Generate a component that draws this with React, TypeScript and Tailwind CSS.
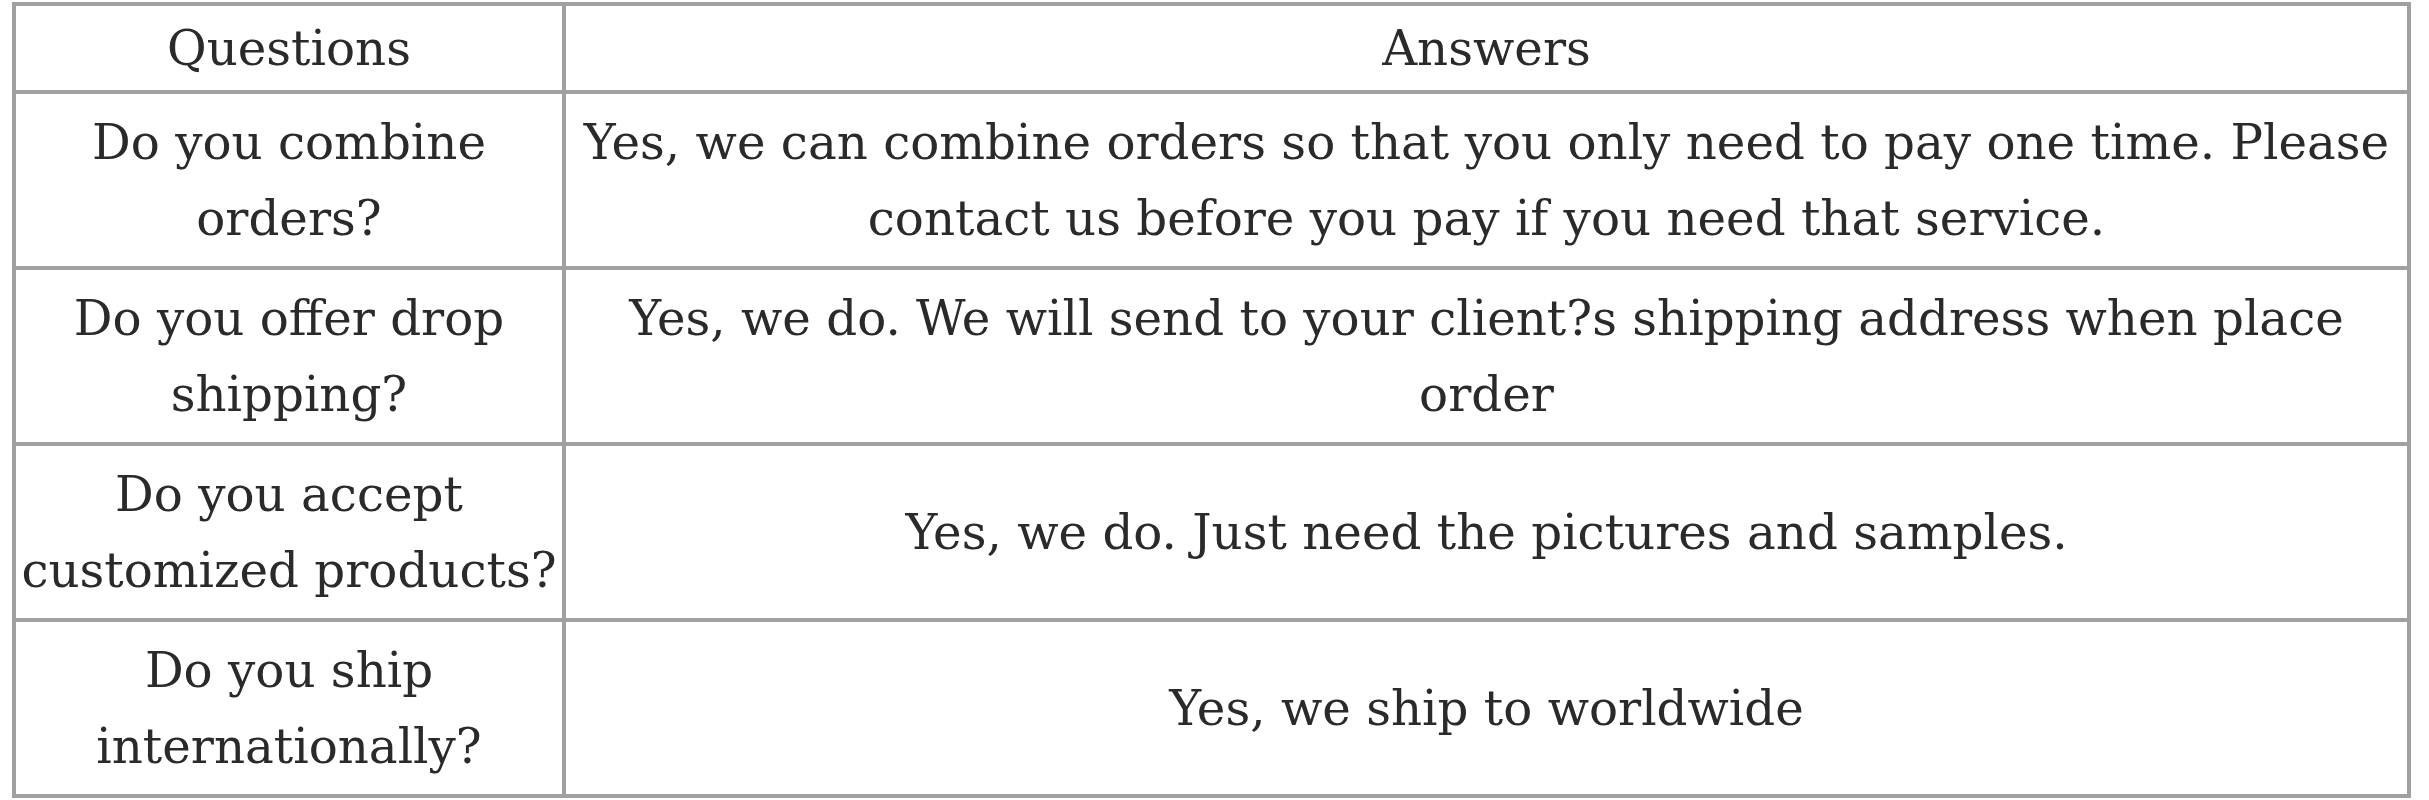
const faqs = [
  {
    q: ["Do you combine", "orders?"],
    a: [
      "Yes, we can combine orders so that you only need to pay one time. Please",
      "contact us before you pay if you need that service.",
    ],
  },
  {
    q: ["Do you offer drop", "shipping?"],
    a: [
      "Yes, we do. We will send to your client?s shipping address when place",
      "order",
    ],
  },
  {
    q: ["Do you accept", "customized products?"],
    a: ["Yes, we do. Just need the pictures and samples."],
  },
  {
    q: ["Do you ship", "internationally?"],
    a: ["Yes, we ship to worldwide"],
  },
];

const Lines = ({ lines }: { lines: string[] }) => (
  <>
    {lines.map((line, i) => (
      <span key={i} className="block whitespace-nowrap">
        {line}
      </span>
    ))}
  </>
);

export default function App() {
  return (
    <div className="min-h-[800px] w-[2429px] bg-white pl-[12px] pt-[2px]">
      <table
        className="w-[2399px] table-fixed border-collapse text-center text-[48.3px] leading-[76px] text-[#2a2a2a]"
        style={{ fontFamily: '"DejaVu Serif", "Liberation Serif", serif' }}
      >
        <colgroup>
          <col className="w-[550px]" />
          <col />
        </colgroup>
        <thead>
          <tr className="h-[88px]">
            <th className="border-4 border-[#a0a0a0] font-normal">Questions</th>
            <th className="border-4 border-[#a0a0a0] font-normal">Answers</th>
          </tr>
        </thead>
        <tbody>
          {faqs.map((row) => (
            <tr key={row.q.join(" ")} className="h-[176px]">
              <td className="border-4 border-[#a0a0a0] p-0 align-middle">
                <Lines lines={row.q} />
              </td>
              <td className="border-4 border-[#a0a0a0] p-0 align-middle">
                <Lines lines={row.a} />
              </td>
            </tr>
          ))}
        </tbody>
      </table>
    </div>
  );
}
